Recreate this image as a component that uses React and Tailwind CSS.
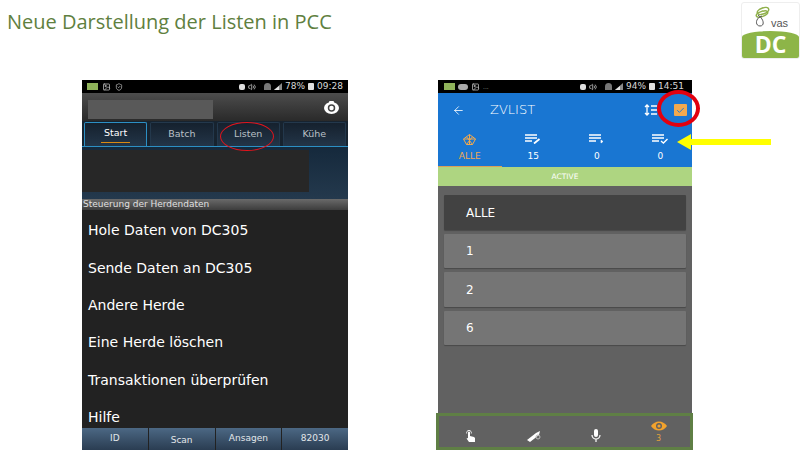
import { ArrowLeft, Check, Image, ShieldCheck, Volume2 } from "lucide-react";

const phoneFont = "font-['DejaVu_Sans',sans-serif]";

const tabs = ["Start", "Batch", "Listen", "Kühe"];
const menu = ["Hole Daten von DC305", "Sende Daten an DC305", "Andere Herde", "Eine Herde löschen", "Transaktionen überprüfen", "Hilfe"];
const buttons = ["ID", "Scan", "Ansagen", "82030"];
const groups = ["ALLE", "1", "2", "6"];

function Signal() {
  return (
    <svg width="8" height="7" viewBox="0 0 8 7">
      <path d="M0 7 L8 7 L8 0 Z" fill="#8a8a8a" />
      <path d="M0 7 L5 7 L5 3 Z" fill="#e5e5e5" />
    </svg>
  );
}

function StatusRight({ level, time }) {
  return (
    <div className="flex items-center gap-[3px] text-[9px] leading-none text-[#d8d8d8]">
      <div className="h-[6px] w-[6px] rounded-[2px] bg-[#e0e0e0]" />
      <Volume2 className="h-[8px] w-[8px] text-[#e0e0e0]" />
      <span className="ml-[5px] h-[7px] w-[7px] rounded-t-full bg-[#777]" />
      <Signal />
      <span>{level}%</span>
      <div className="h-[7px] w-[6px] rounded-[1px] bg-[#e0e0e0]" />
      <span>{time}</span>
    </div>
  );
}

function ListLines({ mark }) {
  return (
    <svg width="16" height="10" viewBox="0 0 16 10" fill="none" stroke="#fff" strokeWidth="1.4">
      <path d="M0 1h12M0 4h12M0 7h7" />
      {mark === "edit" && <path d="M9 9.5 14.5 5" strokeWidth="1.8" />}
      {mark === "play" && <path d="M12 6v3l2-1.5z" fill="#fff" strokeWidth="0.6" />}
      {mark === "check" && <path d="m9 7 2.4 2L15.5 5" />}
    </svg>
  );
}

function LeftPhone() {
  return (
    <div className={`relative flex h-[370px] w-[266px] flex-col ${phoneFont}`}>
      <div className="flex h-[13px] shrink-0 items-center justify-between bg-black px-[5px]">
        <div className="flex items-center gap-[4px]">
          <div className="h-[7px] w-[11px] bg-[#8fb35a]" />
          <Image className="h-[8px] w-[9px] text-[#ddd]" />
          <ShieldCheck className="h-[8px] w-[8px] text-[#ccc]" />
        </div>
        <StatusRight level="78" time="09:28" />
      </div>
      <div className="flex h-[28px] shrink-0 items-center justify-between bg-gradient-to-b from-[#4d4d4d] to-[#2a2a2a] pr-[9px] pl-[6px]">
        <div className="mt-[5px] h-[19px] w-[125px] bg-[#595959]" />
        <svg width="15" height="13" viewBox="0 0 15 13">
          <ellipse cx="7.5" cy="7" rx="7.5" ry="6" fill="#fff" />
          <rect x="5" y="0" width="5" height="3" rx="1" fill="#fff" />
          <circle cx="7.5" cy="7" r="3" fill="none" stroke="#444" strokeWidth="1.5" />
        </svg>
      </div>
      <div className="flex h-[25px] shrink-0 gap-[3px] bg-[#17232f] px-[2px] pt-[1px]">
        {tabs.map((t, i) => (
          <div
            key={t}
            className={`flex flex-1 items-center justify-center rounded-t-[2px] border border-b-0 bg-gradient-to-b from-[#15212e] to-[#233548] text-[9.5px] ${
              i === 0 ? "border-[#2c8fc4] text-white" : "border-[#23384c] text-[#b9c0c6]"
            }`}
          >
            <span className={i === 0 ? "border-b border-[#d98a12] px-[3px] pb-[1px]" : ""}>{t}</span>
          </div>
        ))}
      </div>
      <div className="h-[1px] shrink-0 bg-[#2c8fc4]" />
      <div className="flex h-[52px] shrink-0 flex-col bg-gradient-to-b from-[#15293c] to-[#24394d] pt-[3px]">
        <div className="h-[42px] w-[227px] bg-[#272727]" />
      </div>
      <div className="flex h-[11px] shrink-0 items-center whitespace-nowrap bg-gradient-to-b from-[#6a6a6a] to-[#3d3d3d] pl-[1px] text-[9px] text-[#e0e0e0]">
        Steuerung der Herdendaten
      </div>
      <div className="flex min-h-0 flex-1 flex-col overflow-hidden bg-[#222] pl-[6px] pt-[2px] text-[14px] text-white">
        {menu.map((m) => (
          <div key={m} className="flex h-[37.4px] shrink-0 items-center whitespace-nowrap">
            {m}
          </div>
        ))}
      </div>
      <div className="flex h-[22px] shrink-0 gap-[1px] bg-[#222]">
        {buttons.map((b, i) => (
          <div
            key={b}
            className={`flex flex-1 items-center justify-center bg-gradient-to-b from-[#4c6884] to-[#2a3d52] text-[9px] text-[#e3e7ea] ${i === 1 ? "pt-[3px]" : ""}`}
          >
            {b}
          </div>
        ))}
      </div>
      <div className="absolute top-[42px] left-[138px] h-[29px] w-[54px] rounded-[50%] border-[1.5px] border-[#e2141c]" />
    </div>
  );
}

function RightPhone() {
  return (
    <div className={`relative flex h-[370px] w-[254px] flex-col bg-[#616161] ${phoneFont}`}>
      <div className="flex h-[13px] shrink-0 items-center justify-between bg-black pr-[8px] pl-[6px]">
        <div className="flex items-center gap-[3px]">
          <div className="h-[7px] w-[11px] bg-[#8fb35a]" />
          <div className="h-[6px] w-[10px] rounded-full bg-[#aaa]" />
          <Image className="h-[8px] w-[9px] text-[#ddd]" />
          <span className="text-[6px] leading-none text-[#999]">...</span>
        </div>
        <StatusRight level="94" time="14:51" />
      </div>
      <div className="flex h-[34px] shrink-0 items-center bg-[#1976d2] pl-[14px] text-white">
        <ArrowLeft className="h-[13px] w-[13px]" strokeWidth={1.5} />
        <span className="ml-[25px] text-[13px] font-light">ZVLIST</span>
        <svg className="mr-[17px] ml-auto" width="13" height="12" viewBox="0 0 13 12" fill="none" stroke="#fff" strokeWidth="1.3">
          <path d="M3 1v10M1 3l2-2 2 2M1 9l2 2 2-2M7 2h6M7 6h6M7 10h6" />
        </svg>
        <div className="mr-[5px] flex h-[12px] w-[13px] items-center justify-center rounded-[1px] bg-[#f2a94e]">
          <Check className="h-[9px] w-[9px] text-[#1976d2]" strokeWidth={2.5} />
        </div>
      </div>
      <div className="grid h-[40px] shrink-0 grid-cols-4 bg-[#1976d2] text-[9px] leading-none text-white">
        <div className="flex flex-col items-center justify-end gap-[7px] border-b border-[#d9a05a] pb-[5px] text-[#f2a94e]">
          <svg width="13" height="11" viewBox="0 0 13 11" fill="none" stroke="#f2a94e" strokeWidth="1">
            <path d="M6.5 0.5 12.5 5 9.5 10.5h-6L0.5 5zM0.5 5h12M6.5 0.5v10M3.5 2.7l6 7.8M9.5 2.7l-6 7.8" />
          </svg>
          ALLE
        </div>
        <div className="flex flex-col items-center justify-end gap-[8px] pb-[6px]">
          <ListLines mark="edit" />
          15
        </div>
        <div className="flex flex-col items-center justify-end gap-[8px] pb-[6px]">
          <ListLines mark="play" />
          0
        </div>
        <div className="flex flex-col items-center justify-end gap-[8px] pb-[6px]">
          <ListLines mark="check" />
          0
        </div>
      </div>
      <div className="flex h-[19px] shrink-0 items-center justify-center bg-[#aed581] text-[7.5px] text-white">ACTIVE</div>
      <div className="flex flex-col gap-[4px] px-[6px] pt-[9px]">
        {groups.map((g, i) => (
          <div
            key={g}
            className={`flex h-[34.5px] items-center rounded-[1px] pt-[1px] pl-[22px] text-[12px] text-white shadow-[0_1px_1px_rgba(0,0,0,0.25)] ${
              i === 0 ? "bg-[#424242]" : "bg-[#757575]"
            }`}
          >
            {g}
          </div>
        ))}
      </div>
      <div className="absolute right-[-1px] bottom-0 left-[-2px] grid h-[37px] grid-cols-4 border-[3px] border-[#5f7f45] text-white">
        <div className="flex items-center justify-center pt-[8px]">
          {/* tap finger */}
          <svg width="11" height="13" viewBox="0 0 11 13" fill="none">
            <path d="M3 3.5a1 1 0 0 1 2 0V7l4 1 1 1v4H4L1.5 9.5 3 9z" fill="#fff" />
            <path d="M1.7 4.5a2.4 2.4 0 1 1 4.6 0" stroke="#fff" strokeWidth="0.9" />
          </svg>
        </div>
        <div className="flex items-center justify-center pt-[8px]">
          <svg width="15" height="12" viewBox="0 0 15 12">
            <path d="M1 10 L10 3 L14 1 L13 5 L4 12 Z" fill="#fff" />
            <circle cx="12" cy="7" r="2" fill="none" stroke="#bbb" />
          </svg>
        </div>
        <div className="flex items-center justify-center pt-[8px]">
          <svg width="10" height="13" viewBox="0 0 10 13" fill="none" stroke="#fff">
            <rect x="3" y="0" width="4" height="8" rx="2" fill="#fff" stroke="none" />
            <path d="M1 6a4 4 0 0 0 8 0M5 10v3" strokeWidth="1.2" />
          </svg>
        </div>
        <div className="flex flex-col items-center justify-center text-[8px] leading-none text-[#e0a23c]">
          <svg width="16" height="10" viewBox="0 0 16 10">
            <path d="M0 5c4-6 12-6 16 0-4 6-12 6-16 0z" fill="#f2a22c" />
            <circle cx="8" cy="5" r="3" fill="#616161" />
            <circle cx="8" cy="5" r="1.6" fill="#f2a22c" />
          </svg>
          <span className="mt-[4px]">3</span>
        </div>
      </div>
      <div className="absolute top-[10px] left-[219px] h-[37px] w-[43px] rounded-[50%] border-[4px] border-[#e2000f]" />
      <div className="absolute top-[54px] left-[239px] flex items-center">
        <div className="h-0 w-0 border-y-[8px] border-r-[14px] border-y-transparent border-r-[#ffff00]" />
        <div className="h-[6px] w-[80px] bg-[#ffff00]" />
      </div>
    </div>
  );
}

function Logo() {
  return (
    <div className="mt-[2px] flex h-[57px] w-[59px] flex-col overflow-hidden rounded-[3px] border border-[#eee] bg-white">
      <div className="flex h-[28px] shrink-0 items-end justify-center gap-[1px] pb-[2px] font-['Liberation_Sans',sans-serif] text-[11px] leading-none text-[#555]">
        <svg width="17" height="23" viewBox="0 0 17 23" fill="none" stroke="#8fb04a" strokeWidth="1.5">
          <ellipse cx="10" cy="5" rx="6" ry="3" transform="rotate(-20 10 5)" />
          <ellipse cx="9" cy="8" rx="6" ry="2.5" transform="rotate(-20 9 8)" />
          <path d="M9 10 C2 12 2 20 7 20 C12 20 11 13 5 9" stroke="#555" strokeWidth="1" />
        </svg>
        vas
      </div>
      <div className="flex flex-1 items-center justify-center rounded-t-[50%_6px] bg-[#8db548] font-['Open_Sans',sans-serif] text-[23px] font-bold leading-none text-white">
        DC
      </div>
    </div>
  );
}

export default function App() {
  return (
    <div className="flex h-[450px] w-[800px] flex-col overflow-hidden bg-white">
      <div className="flex h-[80px] shrink-0 items-start justify-between pl-[7px]">
        <h1 className="mt-[8px] font-['Open_Sans',sans-serif] text-[20px] leading-[28px] text-[#5f8040]">
          Neue Darstellung der Listen in PCC
        </h1>
        <Logo />
      </div>
      <div className="flex min-h-0 flex-1 gap-[90px] pl-[82px]">
        <LeftPhone />
        <RightPhone />
      </div>
    </div>
  );
}
